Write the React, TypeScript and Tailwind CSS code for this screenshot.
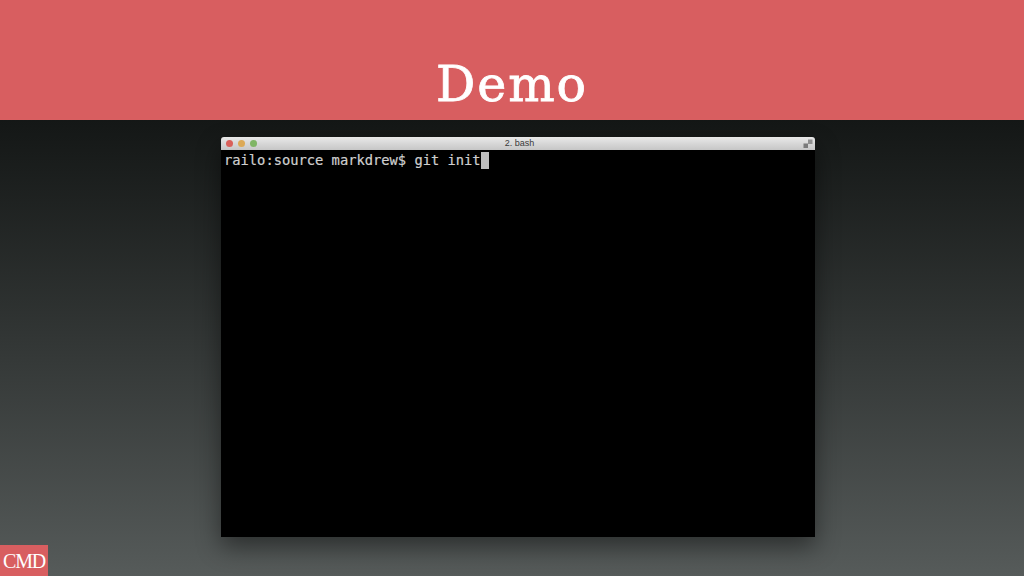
import React from "react";

export default function App() {
  return (
    <div className="relative flex h-[576px] w-[1024px] flex-col overflow-hidden">
      {/* Title band */}
      <div className="flex h-[120px] shrink-0 items-end justify-center bg-[#d85e60] pb-[5px]">
        <h1 className="font-['DejaVu_Serif',serif] text-[49px] leading-[60px] tracking-[2px] text-white [-webkit-text-stroke:0.8px_white]">Demo</h1>
      </div>

      <div className="flex-1 bg-gradient-to-b from-[#141716] to-[#565b5a] pl-[221px] pt-[17px]">
        {/* Terminal window */}
        <div className="flex h-[400px] w-[594px] flex-col overflow-hidden rounded-t-[3px] shadow-[0_10px_24px_rgba(0,0,0,0.45)]">
          <div className="grid h-[13px] shrink-0 grid-cols-[1fr_auto_1fr] items-center bg-gradient-to-b from-[#e9e9e9] to-[#c6c6c6] pl-[5px] pr-[2px]">
            <div className="flex gap-[5px]">
              <span className="h-[7px] w-[7px] rounded-full bg-[#d9605a]" />
              <span className="h-[7px] w-[7px] rounded-full bg-[#dca956]" />
              <span className="h-[7px] w-[7px] rounded-full bg-[#80b565]" />
            </div>
            <span className="font-['Liberation_Sans',sans-serif] text-[9px] leading-[13px] text-[#3a3a3a]">2. bash</span>
            <svg className="justify-self-end" width="10" height="10" viewBox="0 0 10 10">
              <rect x="5" y="0.5" width="4.5" height="4.5" fill="#8f8f8f" />
              <rect x="0.5" y="4.5" width="4.5" height="4.5" fill="#7a7a7a" />
            </svg>
          </div>
          <div className="flex-1 bg-black pl-[3px] pt-[2px]">
            <div className="flex items-center font-['DejaVu_Sans_Mono',monospace] text-[13.75px] leading-[17px] text-[#cfcfcf] [-webkit-text-stroke:0.2px_#cfcfcf]">
              <span className="whitespace-pre">railo:source markdrew$ git init</span>
              <span className="h-[17px] w-[8px] bg-[#bdbdbd]" />
            </div>
          </div>
        </div>
      </div>

      {/* Corner badge */}
      <div className="absolute bottom-0 left-0 flex h-[31px] w-[48px] items-center justify-center bg-[#d85e60] font-['Liberation_Serif',serif] text-[20px] tracking-[-1.2px] text-white">
        CMD
      </div>
    </div>
  );
}
